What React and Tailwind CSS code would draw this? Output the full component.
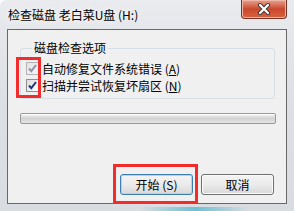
import React from "react";

const font = { fontFamily: '"Noto Sans CJK SC", "Noto Sans", sans-serif' };

function CheckBox({ disabled }) {
  return (
    <div
      className={`w-[13px] h-[13px] border flex items-center justify-center ${
        disabled
          ? "border-[#b4b4b4] bg-gradient-to-br from-[#e4e4e4] to-[#f4f4f4]"
          : "border-[#8e8f8f] bg-gradient-to-br from-[#dcdcdc] to-[#ffffff]"
      }`}
    >
      <svg width="11" height="11" viewBox="0 0 11 11">
        <path
          d="M2 5.5 L4.3 8.2 L9 2"
          fill="none"
          stroke={disabled ? "#8b95ad" : "#21377d"}
          strokeWidth="2"
        />
      </svg>
    </div>
  );
}

function Option({ label, hotkey, disabled }) {
  return (
    <div className="h-[17px] flex items-center gap-[3px]">
      <CheckBox disabled={disabled} />
      <span className="text-[12px] leading-[16px] text-black whitespace-nowrap">
        {label} (<span className="underline">{hotkey}</span>)
      </span>
    </div>
  );
}

function WinButton({ children, focused }) {
  return (
    <button
      type="button"
      className={`w-[73px] h-[21px] rounded-[3px] border text-[12px] leading-[16px] text-black bg-gradient-to-b from-[#f4f4f4] via-[#ebebeb] to-[#d8d8d8] ${
        focused
          ? "border-[#3c7fb1] shadow-[inset_0_0_0_1px_#a8d8f0]"
          : "border-[#707070] shadow-[inset_0_0_0_1px_#fcfcfc]"
      }`}
    >
      {children}
    </button>
  );
}

export default function App() {
  return (
    <div
      className="relative w-[294px] h-[211px] flex flex-col rounded-tl-[6px] overflow-hidden bg-gradient-to-b from-[#e9ebee] via-[#dcdfe3] to-[#d9dde1]"
      style={font}
    >
      {/* title bar */}
      <div className="h-[29px] flex justify-between">
        <div className="pl-[8px] flex items-center text-[12px] text-black [text-shadow:0_0_6px_#ffffff]">
          检查磁盘 老白菜U盘 (H:)
        </div>
        <div className="mr-[7px] w-[46px] h-[19px] rounded-b-[4px] border border-t-0 border-[#7a3124] bg-gradient-to-b from-[#e8a08e] via-[#c9482c] to-[#d8623f] flex items-center justify-center shadow-[inset_0_0_0_1px_#f0b8a8]">
          <svg width="14" height="12" viewBox="0 0 14 12">
            <path d="M3 2 L11 10 M11 2 L3 10" stroke="#3a3a3a" strokeWidth="4" strokeLinecap="round" />
            <path d="M3 2 L11 10 M11 2 L3 10" stroke="#ffffff" strokeWidth="2.2" strokeLinecap="round" />
          </svg>
        </div>
      </div>

      {/* client */}
      <div className="mx-[7px] mb-[7px] h-[175px] border border-[#686868] bg-[#f0f0f0] flex flex-col">
        <fieldset className="ml-[12px] mt-[10px] w-[255px] border border-[#d5dfe5] rounded-[3px] pl-[5px] pt-[4px] pb-[4px]">
          <legend className="ml-[6px] px-[2px] text-[12px] leading-[16px] text-black">
            磁盘检查选项
          </legend>
          <Option label="自动修复文件系统错误" hotkey="A" disabled />
          <Option label="扫描并尝试恢复坏扇区" hotkey="N" />
        </fieldset>

        <div className="ml-[12px] mt-[14px] w-[256px] h-[11px] rounded-[2px] border border-[#9a9a9a] bg-gradient-to-b from-[#f6f6f6] via-[#d2d2d2] to-[#e4e4e4] shadow-[inset_0_1px_0_#ffffff]" />

        <div className="mt-[50px] pr-[12px] flex justify-end gap-[8px]">
          <WinButton focused>开始 (S)</WinButton>
          <WinButton>取消</WinButton>
        </div>
      </div>

      {/* bottom glass tint */}
      <div className="absolute left-[140px] bottom-0 w-[110px] h-[4px] bg-gradient-to-r from-transparent via-[#3fb3cf] to-transparent opacity-70" />

      {/* red annotation boxes */}
      <div className="absolute left-[16px] top-[57px] w-[25px] h-[41px] border-[3px] border-[#f22b2b]" />
      <div className="absolute left-[113px] top-[164px] w-[85px] h-[40px] border-[3px] border-[#f22b2b]" />
    </div>
  );
}
